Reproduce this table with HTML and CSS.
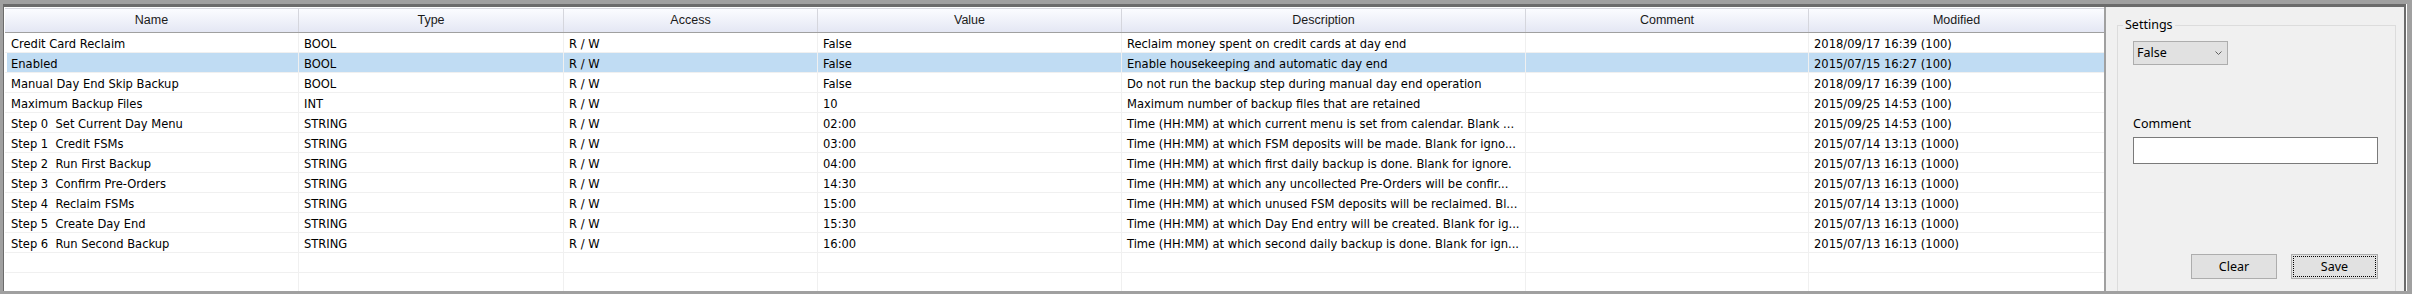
FILE: index.html
```html
<!DOCTYPE html>
<html>
<head>
<meta charset="utf-8">
<link rel="stylesheet" href="styles.css">
</head>
<body>
<div class="frame">
  <div class="grid">
    <div class="row head">
      <div class="c">Name</div><div class="c">Type</div><div class="c">Access</div><div class="c">Value</div><div class="c">Description</div><div class="c">Comment</div><div class="c">Modified</div>
    </div>
    <div class="row"><div class="c">Credit Card Reclaim</div><div class="c">BOOL</div><div class="c">R / W</div><div class="c">False</div><div class="c">Reclaim money spent on credit cards at day end</div><div class="c"></div><div class="c">2018/09/17 16:39 (100)</div></div>
    <div class="row sel"><div class="c">Enabled</div><div class="c">BOOL</div><div class="c">R / W</div><div class="c">False</div><div class="c">Enable housekeeping and automatic day end</div><div class="c"></div><div class="c">2015/07/15 16:27 (100)</div></div>
    <div class="row"><div class="c">Manual Day End Skip Backup</div><div class="c">BOOL</div><div class="c">R / W</div><div class="c">False</div><div class="c">Do not run the backup step during manual day end operation</div><div class="c"></div><div class="c">2018/09/17 16:39 (100)</div></div>
    <div class="row"><div class="c">Maximum Backup Files</div><div class="c">INT</div><div class="c">R / W</div><div class="c">10</div><div class="c">Maximum number of backup files that are retained</div><div class="c"></div><div class="c">2015/09/25 14:53 (100)</div></div>
    <div class="row"><div class="c">Step 0  Set Current Day Menu</div><div class="c">STRING</div><div class="c">R / W</div><div class="c">02:00</div><div class="c">Time (HH:MM) at which current menu is set from calendar. Blank ...</div><div class="c"></div><div class="c">2015/09/25 14:53 (100)</div></div>
    <div class="row"><div class="c">Step 1  Credit FSMs</div><div class="c">STRING</div><div class="c">R / W</div><div class="c">03:00</div><div class="c">Time (HH:MM) at which FSM deposits will be made. Blank for igno...</div><div class="c"></div><div class="c">2015/07/14 13:13 (1000)</div></div>
    <div class="row"><div class="c">Step 2  Run First Backup</div><div class="c">STRING</div><div class="c">R / W</div><div class="c">04:00</div><div class="c">Time (HH:MM) at which first daily backup is done. Blank for ignore.</div><div class="c"></div><div class="c">2015/07/13 16:13 (1000)</div></div>
    <div class="row"><div class="c">Step 3  Confirm Pre-Orders</div><div class="c">STRING</div><div class="c">R / W</div><div class="c">14:30</div><div class="c">Time (HH:MM) at which any uncollected Pre-Orders will be confir...</div><div class="c"></div><div class="c">2015/07/13 16:13 (1000)</div></div>
    <div class="row"><div class="c">Step 4  Reclaim FSMs</div><div class="c">STRING</div><div class="c">R / W</div><div class="c">15:00</div><div class="c">Time (HH:MM) at which unused FSM deposits will be reclaimed. Bl...</div><div class="c"></div><div class="c">2015/07/14 13:13 (1000)</div></div>
    <div class="row"><div class="c">Step 5  Create Day End</div><div class="c">STRING</div><div class="c">R / W</div><div class="c">15:30</div><div class="c">Time (HH:MM) at which Day End entry will be created. Blank for ig...</div><div class="c"></div><div class="c">2015/07/13 16:13 (1000)</div></div>
    <div class="row"><div class="c">Step 6  Run Second Backup</div><div class="c">STRING</div><div class="c">R / W</div><div class="c">16:00</div><div class="c">Time (HH:MM) at which second daily backup is done. Blank for ign...</div><div class="c"></div><div class="c">2015/07/13 16:13 (1000)</div></div>
    <div class="row"><div class="c"></div><div class="c"></div><div class="c"></div><div class="c"></div><div class="c"></div><div class="c"></div><div class="c"></div></div>
    <div class="row"><div class="c"></div><div class="c"></div><div class="c"></div><div class="c"></div><div class="c"></div><div class="c"></div><div class="c"></div></div>
  </div>
  <div class="splitter"></div>
  <div class="panel">
    <fieldset class="group">
      <legend class="legend">Settings</legend>
      <div class="inner">
        <div class="combo"><span>False</span><svg class="chev" width="7" height="4" viewBox="0 0 7 4"><polyline points="0.5,0.5 3.5,3.5 6.5,0.5" fill="none" stroke="#606060" stroke-width="1"/></svg></div>
        <div class="label">Comment</div>
        <div class="textbox"></div>
        <div class="buttons">
          <div class="btn clear">Clear</div>
          <div class="btn save">Save</div>
        </div>
      </div>
    </fieldset>
  </div>
</div>
</body>
</html>
```
FILE: styles.css
```css
* { box-sizing: border-box; }
html, body { margin: 0; }
body {
  width: 2412px;
  height: 294px;
  background: #a0a0a0;
  padding: 4px 6px 3px 3px;
  overflow: hidden;
}
.frame {
  display: flex;
  height: 287px;
  border-top: 3px solid #6b6b6b;
  border-left: 1px solid #6b6b6b;
  border-right: 2px solid #6b6b6b;
  box-shadow: 1px 0 0 #ffffff;
  background: #ffffff;
}
.grid {
  width: 2100px;
  padding: 1px 0 0 1px;
  overflow: hidden;
  background: #ffffff;
  font-family: "DejaVu Sans Condensed", "DejaVu Sans", sans-serif;
  font-stretch: condensed;
  font-size: 12.8px;
  color: #000000;
}
.row {
  display: grid;
  grid-template-columns: 294px 265px 254px 304px 404px 283px 295px;
  height: 20px;
  border-bottom: 1px solid #f0f0f0;
}
.c {
  border-right: 1px solid #f0f0f0;
  padding: 3px 0 0 5px;
  line-height: 16px;
  white-space: pre;
  overflow: hidden;
}
.c:first-child { padding-left: 6px; }
.c:last-child { border-right: 0; }
.sel { background: #c0dcf3; }
.sel .c:first-child { box-shadow: inset 2px 0 0 #ffffff; }
.head {
  height: 25px;
  border-top: 1px solid #d6d7de;
  border-bottom: 1px solid #a0a0a0;
  background: linear-gradient(#fbfcff, #e4e7f4);
  font-family: "Liberation Sans Narrow", "Liberation Sans", sans-serif;
  font-stretch: condensed;
  font-size: 12.5px;
  color: #1a1a1a;
}
.head .c {
  text-align: center;
  padding: 0;
  line-height: 23px;
  border-right: 1px solid #d5d6dd;
}
.head .c:last-child { border-right: 0; }
.splitter {
  width: 2px;
  background: #a0a0a0;
}
.panel {
  flex: 1;
  background: #f0f0f0;
  overflow: hidden;
  font-family: "Noto Sans", "Liberation Sans", sans-serif;
  font-size: 12.5px;
  color: #000000;
}
.group {
  margin: 10px 8px 0 11px;
  padding: 0;
  border: 1px solid #dcdcdc;
  height: 300px;
  min-width: 0;
}
.legend {
  margin-left: 5px;
  padding: 0 2px;
  line-height: 16px;
}
.inner {
  margin-left: 15px;
  width: 245px;
  padding-top: 8px;
  display: flex;
  flex-direction: column;
}
.combo {
  width: 95px;
  height: 24px;
  border: 1px solid #adadad;
  background: #e1e1e1;
  display: flex;
  align-items: center;
  justify-content: space-between;
  padding: 0 5px 0 3px;
  line-height: 16px;
}
.chev { display: block; }
.label {
  margin-top: 51px;
  line-height: 16px;
}
.textbox {
  margin-top: 5px;
  height: 27px;
  border: 1px solid #7a7a7a;
  background: #ffffff;
}
.buttons {
  margin-top: 90px;
  display: flex;
  justify-content: flex-end;
  gap: 14px;
}
.btn {
  height: 25px;
  border: 1px solid #adadad;
  background: #e1e1e1;
  display: flex;
  align-items: center;
  justify-content: center;
  line-height: 16px;
}
.clear { width: 86px; }
.save {
  width: 87px;
  outline: 1px dotted #000000;
  outline-offset: -3px;
}
```
